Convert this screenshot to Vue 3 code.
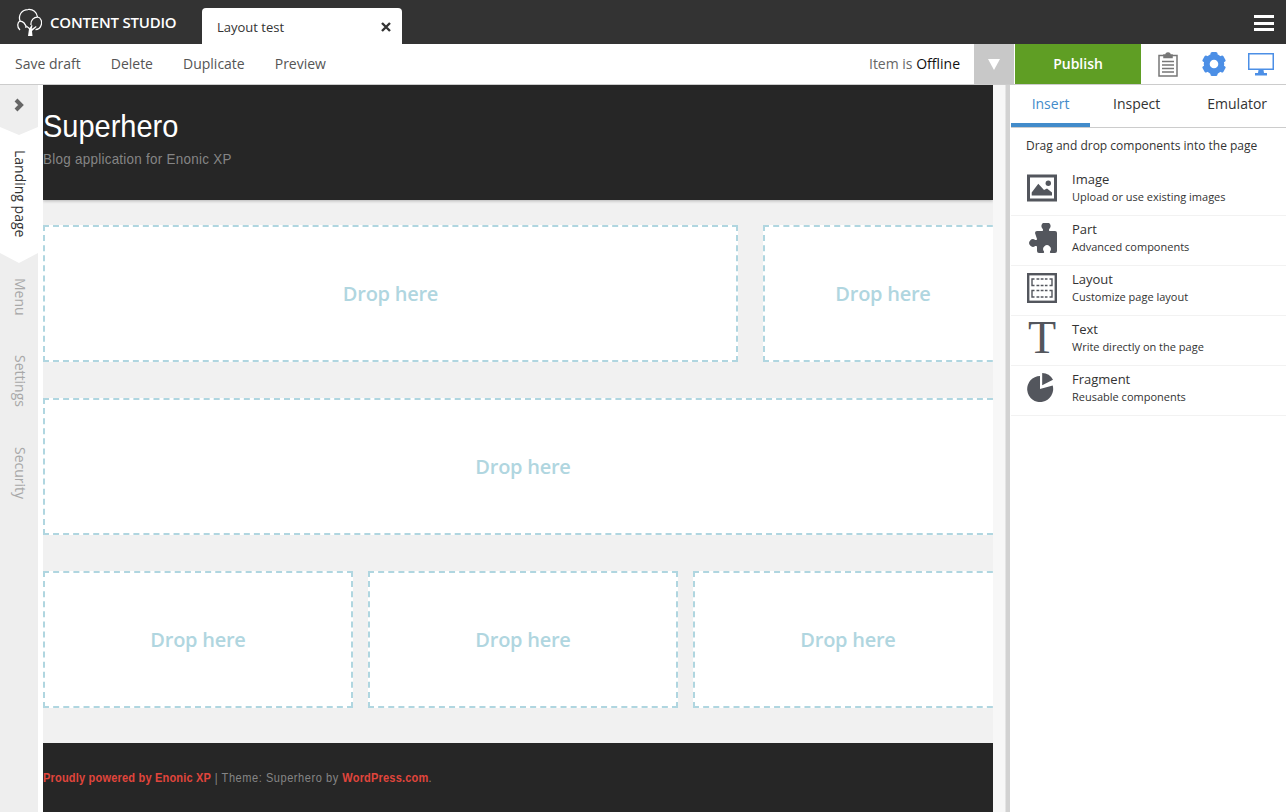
<template>
  <div class="app">
    <header class="topbar">
      <div class="brand">
        <svg class="brand-logo" viewBox="-1 0 26 30" width="26" height="30" fill="none" stroke="#fff" stroke-width="1.25">
          <path d="M3 23 C-0.5 20 0.5 15 3 14 C1 8 5 2.5 11 2.5 C16 2 20 5 20.5 10" />
          <path d="M14 18 C13.5 13 17 10 20.5 10 C24 10.5 25.5 15 24 18.5 C23 21.5 20.5 22.5 18.5 22.5" />
          <path d="M3 14 C6 14 9 17 9 21" />
          <path d="M11 29 L12 22 L8.5 19 L9.5 18.5 L12.8 21 L14.5 18 L15.5 18.5 L14.7 22 L19 19 L19.5 20 L15 24 L15.5 29 Z" fill="#fff" stroke="none" />
        </svg>
        <span class="brand-name">CONTENT STUDIO</span>
      </div>
      <div class="doc-tab">
        <span>Layout test</span>
        <svg viewBox="0 0 10 10" width="10" height="10" stroke="#333" stroke-width="2.4">
          <path d="M1 1 L9 9 M9 1 L1 9" />
        </svg>
      </div>
      <div class="hamburger"><i></i><i></i><i></i></div>
    </header>

    <div class="toolbar">
      <nav class="actions">
        <span v-for="a in actions" :key="a">{{ a }}</span>
      </nav>
      <div class="status">Item is <b>Offline</b></div>
      <div class="status-drop"><i></i></div>
      <button class="publish">Publish</button>
      <div class="tool-icons">
        <svg viewBox="0 0 20 25" width="20" height="25" fill="none" stroke="#777" stroke-width="1.5">
          <path d="M6 3.5 H1 V24 H19 V3.5 H14" />
          <path d="M6 5.5 V3 H8 A2 2 0 0 1 12 3 H14 V5.5 Z" fill="#777" />
          <path d="M4 9.5 H16 M4 13 H16 M4 16.5 H16 M4 20 H16" />
        </svg>
        <svg class="gear" viewBox="0 0 24 24" width="24" height="24" fill="#4c8fe6">
          <circle cx="12" cy="12" r="7.3" fill="none" stroke="#4c8fe6" stroke-width="6" />
          <rect v-for="deg in [0, 60, 120, 180, 240, 300]" :key="deg" x="8.5" y="0" width="7" height="6" rx="1.6" :transform="`rotate(${deg} 12 12)`" />
        </svg>
        <svg viewBox="0 0 26 23" width="26" height="23">
          <rect x="0.75" y="0.75" width="24.5" height="15.5" fill="none" stroke="#4c8fe6" stroke-width="1.5" />
          <path fill="#4c8fe6" d="M10.5 17 H15.5 L16 20 H19 V22.5 H7 V20 H10 Z" />
        </svg>
      </div>
    </div>

    <main class="workspace">
      <aside class="side">
        <svg class="side-toggle" viewBox="0 0 10 14" width="10" height="14">
          <path d="M2 2 L7 7 L2 12" fill="none" stroke="#666" stroke-width="4" />
        </svg>
        <div class="side-tab active"><span>Landing page</span></div>
        <div class="side-item menu">Menu</div>
        <div class="side-item settings">Settings</div>
        <div class="side-item security">Security</div>
      </aside>

      <section class="page">
        <div class="site-head">
          <h1>Superhero</h1>
          <p>Blog application for Enonic XP</p>
        </div>
        <div class="regions">
          <div v-for="(row, i) in rows" :key="i" class="row" :class="row.cls">
            <div v-for="(w, j) in row.cols" :key="j" class="drop" :style="{ width: w + 'px' }">Drop here</div>
          </div>
        </div>
        <div class="site-foot">
          <span><a>Proudly powered by Enonic XP</a> | Theme: Superhero by <a>WordPress.com</a>.</span>
        </div>
      </section>

      <div class="splitter"></div>

      <aside class="panel">
        <div class="panel-tabs">
          <span class="on">Insert</span>
          <span class="t2">Inspect</span>
          <span class="t3">Emulator</span>
        </div>
        <div class="hint">Drag and drop components into the page</div>
        <ul class="comps">
          <li>
            <svg class="ic" viewBox="0 0 30 30" width="30" height="30">
              <rect y="1.5" width="30" height="27" fill="#53565d" />
              <rect x="3" y="4.5" width="24" height="21" fill="#fff" />
              <path fill="#53565d" d="M4.7 22.5 V19.5 L11.3 10.8 L17 17 L20 15.5 L25 19.5 V22.5 Z" />
              <circle cx="21.3" cy="10.3" r="2.7" fill="#53565d" />
            </svg>
            <div class="label"><b>Image</b><small>Upload or use existing images</small></div>
          </li>
          <li>
            <svg class="ic" viewBox="0 0 30 30" width="30" height="30">
              <path fill="#53565d" d="M8 10 a2 2 0 0 1 2-2 h5 c1 0 1.4-1 .7-2 a4.4 4.4 0 1 1 6.6 0 c-.7 1-.3 2 .7 2 h5 a2 2 0 0 1 2 2 v18 a2 2 0 0 1-2 2 h-4 c-1 0-1.4-.8-.9-1.8 a3.8 3.8 0 1 0-6.2 0 c.5 1 .1 1.8-.9 1.8 h-4 a2 2 0 0 1-2-2 v-4 c0-1-.8-1.4-1.8-.9 a3.8 3.8 0 1 1 0-6.2 c1 .5 1.8.1 1.8-.9 z" />
            </svg>
            <div class="label"><b>Part</b><small>Advanced components</small></div>
          </li>
          <li>
            <svg class="ic" viewBox="0 0 30 30" width="30" height="30" fill="none" stroke="#53565d">
              <rect x="1.2" y="1.2" width="27.6" height="27.6" stroke-width="2.4" />
              <path d="M7.5 6 H5 V12.5 H7.5 M22.5 6 H25 V12.5 H22.5 M7.5 17.5 H5 V24 H7.5 M22.5 17.5 H25 V24 H22.5" stroke-width="1.4" />
              <path d="M9.5 6 H20.5 M9.5 12.5 H20.5 M9.5 17.5 H20.5 M9.5 24 H20.5" stroke-width="1.4" stroke-dasharray="2.8 1.4" />
            </svg>
            <div class="label"><b>Layout</b><small>Customize page layout</small></div>
          </li>
          <li>
            <span class="ic ic-t">T</span>
            <div class="label"><b>Text</b><small>Write directly on the page</small></div>
          </li>
          <li>
            <svg class="ic" viewBox="0 0 30 30" width="30" height="30" fill="#53565d">
              <path d="M13 16 V3 A13 13 0 1 0 25.7 12.5 Z" />
              <path d="M15.2 12.3 V0 A13 13 0 0 1 26 6.7 Z" />
            </svg>
            <div class="label"><b>Fragment</b><small>Reusable components</small></div>
          </li>
        </ul>
      </aside>
    </main>
  </div>
</template>

<script setup>
const actions = ['Save draft', 'Delete', 'Duplicate', 'Preview']

const rows = [
  { cls: 'gap-wide', cols: [695, 240] },
  { cls: '', cols: [960] },
  { cls: 'gap-thin', cols: [310, 310, 310] },
]
</script>

<style>
html, body { margin: 0; overflow: hidden; }
</style>

<style scoped>
.app {
  width: 1286px;
  height: 812px;
  display: flex;
  flex-direction: column;
  font-family: "Open Sans", "Liberation Sans", sans-serif;
  background: #fff;
  overflow: hidden;
}

.topbar {
  height: 44px;
  flex: none;
  background: #333;
  display: flex;
  align-items: flex-end;
  padding: 0 12px 0 16px;
  box-sizing: border-box;
}
.brand {
  width: 186px;
  height: 44px;
  display: flex;
  align-items: center;
  gap: 8px;
}
.brand-name {
  color: #fff;
  font-size: 15px;
  font-weight: 600;
  letter-spacing: -0.2px;
}
.doc-tab {
  width: 200px;
  height: 36px;
  box-sizing: border-box;
  padding: 2px 11px 0 15px;
  background: #fff;
  border-radius: 4px 4px 0 0;
  display: flex;
  align-items: center;
  justify-content: space-between;
  font-size: 13px;
  color: #333;
}
.hamburger {
  margin: 0 0 13px auto;
  width: 20px;
  height: 16px;
  display: flex;
  flex-direction: column;
  justify-content: space-between;
}
.hamburger i {
  height: 3px;
  background: #fff;
}

.toolbar {
  height: 41px;
  flex: none;
  box-sizing: border-box;
  border-bottom: 1px solid #ccc;
  display: flex;
  align-items: stretch;
  padding-left: 15px;
}
.actions {
  display: flex;
  align-items: center;
  gap: 30px;
  font-size: 14px;
  color: #555;
  padding-bottom: 2px;
}
.status {
  margin-left: auto;
  align-self: center;
  font-size: 14px;
  color: #666;
  padding: 0 14px 2px 0;
}
.status b {
  font-weight: 400;
  color: #111;
}
.status-drop {
  width: 40px;
  background: #c8c8c8;
  display: flex;
  align-items: center;
  justify-content: center;
}
.status-drop i {
  width: 0;
  height: 0;
  border-left: 6px solid transparent;
  border-right: 6px solid transparent;
  border-top: 11px solid #fff;
}
.publish {
  width: 126px;
  margin-left: 1px;
  border: none;
  background: #5f9e24;
  color: #fff;
  font: 600 14px "Open Sans", sans-serif;
  padding: 0 0 2px;
}
.tool-icons {
  width: 145px;
  box-sizing: border-box;
  padding: 0 12px 0 17px;
  display: flex;
  align-items: center;
  justify-content: space-between;
}
.gear {
  margin-left: 1px;
}

.workspace {
  flex: 1;
  min-height: 0;
  display: flex;
}

.side {
  position: relative;
  width: 38px;
  margin-right: 5px;
  flex: none;
  background: #eee;
  color: #a8a8a8;
  font-size: 14px;
}
.side-toggle {
  position: absolute;
  left: 14px;
  top: 13px;
}
.side-tab {
  position: absolute;
  top: 42px;
  left: 0;
  width: 38px;
  height: 136px;
  background: #fff;
  clip-path: polygon(0 0, 50% 8px, 100% 0, 100% 126px, 50% 136px, 0 126px);
  color: #333;
}
.side-tab span {
  position: absolute;
  left: 9px;
  top: 23px;
}
.side-tab span,
.side-item {
  writing-mode: vertical-rl;
  line-height: 22px;
}
.side-item {
  position: absolute;
  left: 9px;
}
.menu { top: 193px; }
.settings { top: 270px; }
.security { top: 362px; }

.page {
  width: 950px;
  flex: none;
  display: flex;
  flex-direction: column;
  background: #f1f1f1;
  overflow: hidden;
}
.site-head {
  height: 115px;
  flex: none;
  background: #262626;
  box-shadow: 0 1px 3px rgba(0, 0, 0, 0.25);
  position: relative;
  box-sizing: border-box;
  padding-top: 22px;
}
/* no narrow family installed, so the theme's condensed type is squeezed */
.site-head h1 {
  margin: 0;
  color: #fff;
  font: 400 32px/38px "Liberation Sans", sans-serif;
  transform: scaleX(0.906);
  transform-origin: left center;
}
.site-head p {
  margin: 4px 0 0;
  color: #858585;
  font: 400 15px/20px "Liberation Sans", sans-serif;
  letter-spacing: 0.3px;
  transform: scaleX(0.895);
  transform-origin: left center;
}
.regions {
  width: 960px;
  flex: none;
  padding-top: 25px;
}
.row {
  display: flex;
  margin-bottom: 36px;
}
.gap-wide { gap: 25px; }
.gap-thin { gap: 15px; }
.drop {
  height: 137px;
  box-sizing: border-box;
  flex: none;
  background: #fff;
  border: 2px dashed #b0d6e0;
  display: flex;
  align-items: center;
  justify-content: center;
  color: #b0d6e0;
  font-size: 20px;
  font-weight: 600;
  letter-spacing: -0.25px;
}
.site-foot {
  margin-top: -1px;
  flex: 1;
  background: #262626;
  color: #858585;
  display: flex;
  align-items: center;
  font: 400 13px "Liberation Sans", sans-serif;
  letter-spacing: 0.65px;
  padding-bottom: 1px;
  white-space: nowrap;
}
.site-foot span {
  transform: scaleX(0.848);
  transform-origin: left center;
}
.site-foot a {
  color: #e0453c;
  font-weight: 700;
  letter-spacing: 0.22px;
}

.splitter {
  width: 18px;
  flex: none;
  background: linear-gradient(90deg, #f7f7f7 0, #f7f7f7 12px, #d2d2d2 13px, #d2d2d2 17px, #fff 17px);
}

.panel {
  flex: 1;
  min-width: 0;
}
.panel-tabs {
  height: 43px;
  box-sizing: border-box;
  border-bottom: 1px solid #ccc;
  display: flex;
  font-size: 14px;
  color: #333;
}
.panel-tabs span {
  line-height: 38px;
}
.panel-tabs .on {
  width: 79px;
  text-align: center;
  height: 42px;
  box-sizing: border-box;
  color: #428bca;
  border-bottom: 4px solid #428bca;
}
.panel-tabs .t2 { margin-left: 23px; }
.panel-tabs .t3 { margin-left: 47px; }
.hint {
  height: 38px;
  box-sizing: border-box;
  padding: 9px 0 0 15px;
  font-size: 12px;
  line-height: 17px;
  color: #333;
}
.comps {
  list-style: none;
  margin: 0;
  padding: 0;
}
.comps li {
  height: 50px;
  box-sizing: border-box;
  border-bottom: 1px solid #f2f2f2;
  display: flex;
  align-items: center;
  gap: 15px;
  padding: 0 0 5px 16px;
  color: #333;
}
.label {
  margin-top: -2px;
}
.comps b {
  display: block;
  font-size: 13px;
  font-weight: 400;
  line-height: 18px;
}
.comps small {
  display: block;
  font-size: 11px;
  line-height: 17px;
}
.ic {
  flex: none;
  width: 30px;
}
.ic-t {
  font: 46px/30px "Liberation Serif", serif;
  color: #53565d;
  text-align: center;
}
</style>
